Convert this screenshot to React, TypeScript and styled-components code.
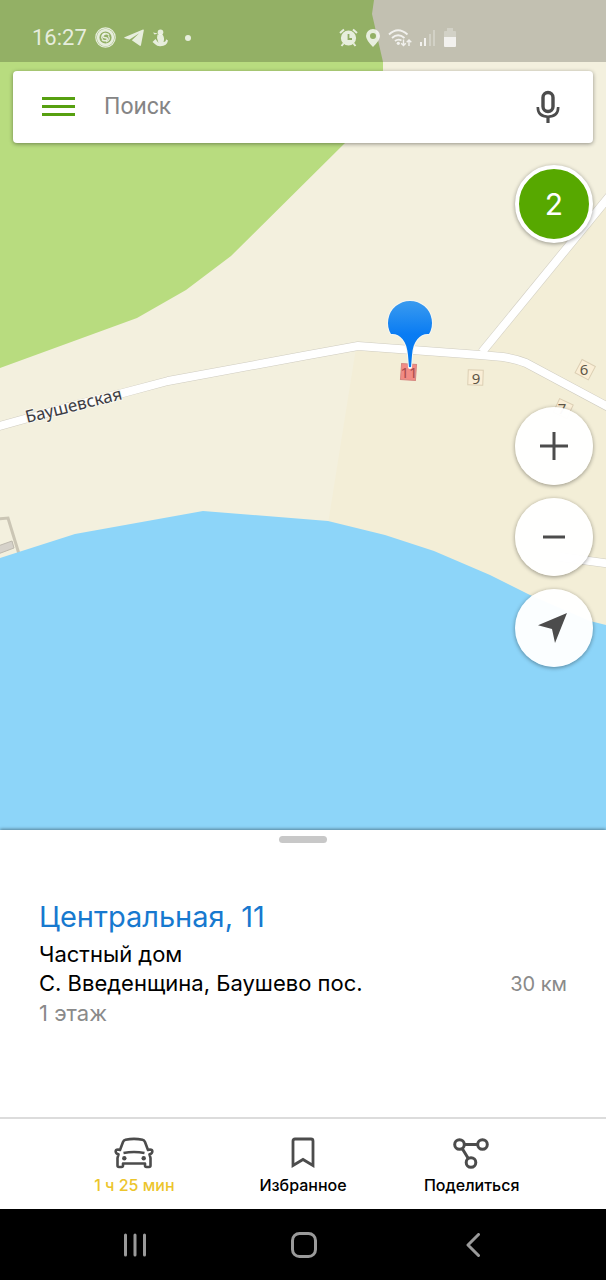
import React from "react";
import styled, { createGlobalStyle } from "styled-components";

const GlobalStyle = createGlobalStyle`
  * { box-sizing: border-box; }
  body { margin: 0; background: #fff; }
  button, input { font: inherit; margin: 0; padding: 0; border: 0; background: none; }
  button { cursor: pointer; }
  svg { display: block; }
`;

const Screen = styled.div`
  display: flex;
  flex-direction: column;
  min-height: 100vh;
  font-family: Inter, "Liberation Sans", sans-serif;
`;

const MapArea = styled.main`
  position: relative;
  isolation: isolate;
  flex: 1;
  display: flex;
  flex-direction: column;
  padding-bottom: 162px;
  overflow: hidden;
`;

const MapCanvas = styled.svg`
  position: absolute;
  inset: 0;
  z-index: -1;
  width: 100%;
  height: 100%;
`;

const StatusBar = styled.header`
  display: flex;
  align-items: center;
  justify-content: space-between;
  height: 62px;
  padding: 13px 150px 0 32px;
  background: rgba(0, 0, 0, 0.2);
  color: rgba(255, 255, 255, 0.78);
  font-family: Roboto, sans-serif;
  font-size: 22px;
  line-height: 26px;
`;

const StatusGroup = styled.div<{ $gap: number }>`
  display: flex;
  align-items: center;
  gap: ${(p) => p.$gap}px;
`;

const SearchBar = styled.form`
  display: flex;
  align-items: center;
  height: 72px;
  margin: 9px 13px 0;
  padding: 0 29px;
  gap: 29px;
  border-radius: 4px;
  background: #fff;
  box-shadow: 0 1px 4px rgba(0, 0, 0, 0.4);
`;

const IconButton = styled.button`
  display: flex;
  flex: none;
`;

const SearchInput = styled.input`
  flex: 1;
  min-width: 0;
  height: 48px;
  padding-bottom: 2px;
  outline: 0;
  color: #333;
  font-family: Roboto, sans-serif;
  font-size: 23px;
  &::placeholder { color: #858585; opacity: 1; }
`;

const Controls = styled.div`
  display: flex;
  flex-direction: column;
  align-items: flex-end;
  gap: 164px;
  padding: 22px 13px 0;
`;

const ControlStack = styled.div`
  display: flex;
  flex-direction: column;
  gap: 13px;
`;

const RoundButton = styled.button<{ $accent?: boolean }>`
  display: flex;
  align-items: center;
  justify-content: center;
  width: 78px;
  height: 78px;
  border-radius: 50%;
  background: ${(p) => (p.$accent ? "#57a800" : "rgba(255, 255, 255, 0.97)")};
  border: ${(p) => (p.$accent ? "4px solid #fff" : "0")};
  color: #fff;
  font-size: 30px;
  line-height: 36px;
  box-shadow: 0 1px 4px rgba(0, 0, 0, 0.4);
`;

const Sheet = styled.section`
  display: flex;
  flex-direction: column;
  padding: 6px 39px 89px;
  background: #fff;
  box-shadow: 0 -1px 3px rgba(0, 0, 0, 0.4);
  z-index: 1;
`;

const Handle = styled.div`
  align-self: center;
  width: 48px;
  height: 7px;
  border-radius: 4px;
  background: #c8c8c8;
`;

const Title = styled.h1`
  margin: 56px 0 5px;
  color: #1779cf;
  font-size: 29px;
  font-weight: 400;
  line-height: 36px;
`;

const InfoRow = styled.div`
  display: flex;
  justify-content: space-between;
  align-items: baseline;
`;

const Info = styled.p<{ $muted?: boolean; $small?: boolean }>`
  margin: 0;
  color: ${(p) => (p.$muted ? "#8a8a8a" : "#000")};
  font-size: ${(p) => (p.$small ? 20 : 22)}px;
  line-height: 29px;
`;

const Actions = styled.nav`
  display: flex;
  height: 92px;
  padding: 18px 50px 0;
  border-top: 2px solid #dcdcdc;
  background: #fff;
  z-index: 1;
`;

const Action = styled.button<{ $color: string }>`
  flex: 1;
  display: flex;
  flex-direction: column;
  align-items: center;
  justify-content: flex-start;
  gap: 6px;
  color: ${(p) => p.$color};
  font-size: 16px;
  font-weight: 500;
  line-height: 20px;
  white-space: nowrap;
`;

const SystemNav = styled.nav`
  display: flex;
  height: 71px;
  padding: 0 49px 0 51px;
  background: #000;
`;

const SystemButton = styled.button`
  flex: 1;
  display: flex;
  align-items: center;
  justify-content: center;
`;

const MAIN_ROAD = "M-4 427 L75 405 L123 393 L168 381 L303 356 L358 346 L480 355 L503 357 Q516 359 526 363 L612 409";
const SIDE_ROAD = "M482 352 L612 193";
const LANE = "M560 557 L612 564";

const MapView = () => (
  <MapCanvas viewBox="0 0 606 830" preserveAspectRatio="xMidYMin slice" role="img" aria-label="Карта">
    <defs>
      <linearGradient id="pin" x1="0" y1="0" x2="0" y2="1">
        <stop offset="0" stopColor="#3a9bef" />
        <stop offset="0.5" stopColor="#0a7cf3" />
        <stop offset="1" stopColor="#0078f0" />
      </linearGradient>
    </defs>
    <rect width="606" height="830" fill="#f3f0de" />
    <path d="M356 348 L480 355 L606 200 V640 L328 524 Z" fill="#f3eed7" />
    <path d="M0 0 H374 L372 14 L383 62 V105 L345 143 L231 256 L186 290 L137 318 L0 368 Z" fill="#b8dc7f" />
    <path d="M-2 519 L8 518 L19 554" fill="none" stroke="#cbc6b5" strokeWidth="3" />
    <path d="M-2 546 L12 541 L14 548 L-2 554 Z" fill="#d6d2ca" stroke="#bdb9ae" />
    <path d="M0 558 L75 534 L203 511 L328 521 L385 535 L434 551 L490 575 L530 595 L590 621 L606 625 V830 H0 Z" fill="#8dd5f9" />
    <g fill="none" stroke="#cfccc0" strokeWidth="9" strokeLinejoin="round">
      <path d={MAIN_ROAD} />
      <path d={SIDE_ROAD} />
      <path d={LANE} />
    </g>
    <g fill="none" stroke="#fff" strokeWidth="8" strokeLinejoin="round">
      <path d={MAIN_ROAD} />
      <path d={SIDE_ROAD} />
      <path d={LANE} />
    </g>
    <text
      transform="translate(27 423) rotate(-14)"
      fontFamily="Noto Sans, sans-serif"
      fontSize="17"
      fill="#3c3c44"
      stroke="#f9f7ee"
      strokeWidth="2"
      paintOrder="stroke"
    >
      Баушевская
    </text>
    <g fill="#faeed6" stroke="#dccfb4">
      <rect x="468" y="370" width="15" height="15" transform="rotate(2 476 378)" />
      <rect x="578" y="362" width="15" height="15" transform="rotate(28 585 369)" />
      <rect x="556" y="401" width="15" height="15" transform="rotate(25 563 408)" />
      <rect x="401" y="364" width="15" height="16" transform="rotate(4 408 372)" fill="#f18b84" stroke="#d58880" />
    </g>
    <g fontFamily="Noto Sans, sans-serif" fontSize="15" textAnchor="middle" fill="#5e5647">
      <text x="476" y="384">9</text>
      <text x="584" y="375">6</text>
      <text x="562" y="414">7</text>
      <text x="409" y="378" fill="#a84c4c">11</text>
    </g>
    <circle cx="410" cy="367" r="2" fill="#fff" />
    <path
      d="M391 334 A22 22 0 1 1 429 334 C421 333 413 340 412 355 L411 367 H409 L408 355 C407 340 399 333 391 334 Z"
      fill="url(#pin)"
      stroke="#f6f6f0"
      strokeWidth="2"
      paintOrder="stroke"
    />
  </MapCanvas>
);

const SpiralIcon = () => (
  <svg width="21" height="21" viewBox="0 0 21 21" fill="none" stroke="currentColor">
    <circle cx="10.500" cy="10.500" r="9.700" strokeWidth="1.200" />
    <circle cx="10.500" cy="10.500" r="7.400" strokeWidth="2.600" />
    <path d="M14 8.500 C12.500 5.500 7.500 7 8 9.500 C8.500 11.500 11.500 10 12.300 11.500 C13 13.500 9 15 7 12.500" strokeWidth="1.500" />
    <path d="M10.500 6 C6.500 6.500 6 10.500 7.500 12 M11 15 C14.500 14 15 11 13.500 9" strokeWidth="1.200" />
  </svg>
);

const TelegramIcon = () => (
  <svg width="20" height="18" viewBox="0 0 20 18" fill="currentColor">
    <path
      fillRule="evenodd"
      d="M0.500 8.200 L19 0.600 Q20 0.400 19.800 1.600 L17 16 Q16.600 17.400 15.400 16.600 L7.800 11.200 L15.200 4.200 L5.600 10.400 L1 9.300 Q-0.200 8.800 0.500 8.200 Z"
    />
  </svg>
);

const FigureIcon = () => (
  <svg width="16" height="18" viewBox="0 0 16 18" fill="currentColor">
    <circle cx="8.500" cy="3.300" r="2.800" />
    <path d="M5.500 5.500 H10.500 Q13 9 11.500 13 Q14 13 14 10.300 L16 11.500 Q15 17 8.500 17.300 Q5 17.500 3.500 15.500 L0.500 13 L3.500 10 L6.500 14 L5 9 Z" />
    <path d="M6 4.500 L1 3.500 L2.500 5.500 Z" />
  </svg>
);

const AlarmIcon = () => (
  <svg width="19" height="19" viewBox="0 0 19 19" fill="none" stroke="currentColor">
    <circle cx="9.500" cy="10" r="7.600" fill="currentColor" stroke="none" />
    <path d="M1 5 L5 1.500 M18 5 L14 1.500 M4.500 15.500 L2.500 18 M14.500 15.500 L16.500 18" strokeWidth="2" />
    <path d="M9.500 6 V11 H13" stroke="#91ad66" strokeWidth="1.800" />
  </svg>
);

const PlaceIcon = () => (
  <svg width="14" height="18" viewBox="0 0 14 18" fill="currentColor">
    <path fillRule="evenodd" d="M7 0 A7 7 0 0 1 14 7 Q14 11 7 18 Q0 11 0 7 A7 7 0 0 1 7 0 Z M7 4 A3 3 0 1 0 7 10 A3 3 0 1 0 7 4 Z" />
  </svg>
);

const WifiIcon = () => (
  <svg width="24" height="18" viewBox="0 0 24 18" fill="none" stroke="currentColor">
    <path d="M1 5.500 Q10 -3 19.500 5.500 M4 9 Q10 3.500 16.500 9 M7 12 Q10 9.500 13.500 11.500" strokeWidth="1.900" />
    <circle cx="10.300" cy="14.300" r="1.600" fill="currentColor" stroke="none" />
    <path d="M15.500 10.500 V16.500 M13.200 14.200 L15.500 16.500 L17.800 14.200 M21 17 V11 M18.700 13.200 L21 11 L23.300 13.200" strokeWidth="1.400" />
  </svg>
);

const SignalIcon = () => (
  <svg width="16" height="18" viewBox="0 0 16 18" fill="currentColor">
    <path d="M0 13 H2 V17 H0 Z M4 9 H6 V17 H4 Z" />
    <path d="M9 5 H11 V17 H9 Z M13 1 H15 V17 H13 Z" opacity="0.35" />
  </svg>
);

const BatteryIcon = () => (
  <svg width="12" height="19" viewBox="0 0 12 19" fill="currentColor">
    <path d="M3 0 H9 V3 H11 Q12 3 12 4 V9 H0 V4 Q0 3 1 3 H3 Z" opacity="0.35" />
    <path d="M0 9 H12 V18 Q12 19 11 19 H1 Q0 19 0 18 Z" />
  </svg>
);

const CarIcon = () => (
  <svg width="40" height="32" viewBox="0 0 40 32" fill="none" stroke="#4c4c4c" strokeWidth="2.600" strokeLinejoin="round">
    <path d="M11.500 2.800 Q20 1 28.500 2.800 Q30.300 3.200 31 5 L34 13 L36 12.500 Q38.500 12.500 38.300 14.500 Q38.300 16.500 35.500 17.300 L36.500 21 V28.500 Q36.500 30 35 30 H32.500 Q31 30 31 28.500 V26.500 H9 V28.500 Q9 30 7.500 30 H5 Q3.500 30 3.500 28.500 V21 L4.500 17.300 Q1.700 16.500 1.700 14.500 Q1.500 12.500 4 12.500 L6 13 L9 5 Q9.700 3.200 11.500 2.800 Z" />
    <path d="M9.500 16 Q20 14 30.500 16" />
    <circle cx="10.300" cy="21.300" r="2.200" fill="#4c4c4c" stroke="none" />
    <circle cx="29.700" cy="21.300" r="2.200" fill="#4c4c4c" stroke="none" />
  </svg>
);

const BookmarkIcon = () => (
  <svg width="24" height="32" viewBox="0 0 24 32" fill="none" stroke="#4c4c4c" strokeWidth="2.800">
    <path d="M2 28.500 V4 Q2 2 4 2 H20 Q22 2 22 4 V28.500 L12 22.500 Z" />
  </svg>
);

const ShareIcon = () => (
  <svg width="38" height="32" viewBox="0 0 38 32" fill="none" stroke="#4c4c4c" strokeWidth="3">
    <circle cx="6.500" cy="7.500" r="4.800" />
    <circle cx="29.500" cy="7.500" r="4.800" />
    <circle cx="18" cy="25.500" r="4.800" />
    <path d="M11 7.500 H25 M9.200 11.500 L15.300 21.500" />
  </svg>
);

export default function App() {
  return (
    <Screen>
      <GlobalStyle />
      <MapArea>
        <MapView />
        <StatusBar>
          <StatusGroup $gap={8}>
            <span>16:27</span>
            <SpiralIcon />
            <TelegramIcon />
            <FigureIcon />
            <svg width="20" height="6" viewBox="0 0 20 6" fill="currentColor">
              <circle cx="12" cy="3" r="3" />
            </svg>
          </StatusGroup>
          <StatusGroup $gap={8}>
            <AlarmIcon />
            <PlaceIcon />
            <WifiIcon />
            <SignalIcon />
            <BatteryIcon />
          </StatusGroup>
        </StatusBar>
        <SearchBar role="search" onSubmit={(e) => e.preventDefault()}>
          <IconButton type="button" aria-label="Меню">
            <svg width="33" height="20" viewBox="0 0 33 20" fill="#57a010">
              <path d="M0 0 H33 V3 H0 Z M0 8 H33 V11 H0 Z M0 16 H33 V19 H0 Z" />
            </svg>
          </IconButton>
          <SearchInput type="text" aria-label="Поиск" placeholder="Поиск" />
          <IconButton type="button" aria-label="Голосовой поиск">
            <svg width="32" height="34" viewBox="0 0 32 34" fill="none" stroke="#4c4c4c">
              <rect x="11" y="2.500" width="10" height="19" rx="5" strokeWidth="3.400" />
              <path d="M5.800 17 Q5.800 26.700 16 26.700 Q26.200 26.700 26.200 17" strokeWidth="2.600" />
              <path d="M16 27 V33" strokeWidth="3.200" />
            </svg>
          </IconButton>
        </SearchBar>
        <Controls>
          <RoundButton $accent aria-label="Пробки: 2">2</RoundButton>
          <ControlStack>
            <RoundButton aria-label="Приблизить">
              <svg width="28" height="28" viewBox="0 0 28 28" stroke="#4c4c4c" strokeWidth="3">
                <path d="M0 14 H28 M14 0 V28" />
              </svg>
            </RoundButton>
            <RoundButton aria-label="Отдалить">
              <svg width="22" height="4" viewBox="0 0 22 4" stroke="#4c4c4c" strokeWidth="3">
                <path d="M0 2 H22" />
              </svg>
            </RoundButton>
            <RoundButton aria-label="Моё местоположение">
              <svg width="32" height="30" viewBox="0 0 32 30" fill="#4c4c4c">
                <path d="M29 0 L0 12.300 L14 16 L17 30 Z" />
              </svg>
            </RoundButton>
          </ControlStack>
        </Controls>
      </MapArea>
      <Sheet>
        <Handle />
        <Title>Центральная, 11</Title>
        <Info>Частный дом</Info>
        <InfoRow>
          <Info>С. Введенщина, Баушево пос.</Info>
          <Info $muted $small>30 км</Info>
        </InfoRow>
        <Info $muted>1 этаж</Info>
      </Sheet>
      <Actions aria-label="Действия">
        <Action $color="#ecc52c">
          <CarIcon />
          1 ч 25 мин
        </Action>
        <Action $color="#000">
          <BookmarkIcon />
          Избранное
        </Action>
        <Action $color="#000">
          <ShareIcon />
          Поделиться
        </Action>
      </Actions>
      <SystemNav aria-label="Система">
        <SystemButton aria-label="Недавние">
          <svg width="24" height="24" viewBox="0 0 24 24" stroke="#9a9a9a" strokeWidth="3" strokeLinecap="round">
            <path d="M2.500 2 V22 M12 2 V22 M21.500 2 V22" />
          </svg>
        </SystemButton>
        <SystemButton aria-label="Домой">
          <svg width="26" height="26" viewBox="0 0 26 26" fill="none" stroke="#9a9a9a" strokeWidth="3">
            <rect x="1.500" y="1.500" width="23" height="23" rx="7" />
          </svg>
        </SystemButton>
        <SystemButton aria-label="Назад">
          <svg width="14" height="24" viewBox="0 0 14 24" fill="none" stroke="#9a9a9a" strokeWidth="3" strokeLinecap="round" strokeLinejoin="round">
            <path d="M12.500 1.500 L2 12 L12.500 22.500" />
          </svg>
        </SystemButton>
      </SystemNav>
    </Screen>
  );
}
